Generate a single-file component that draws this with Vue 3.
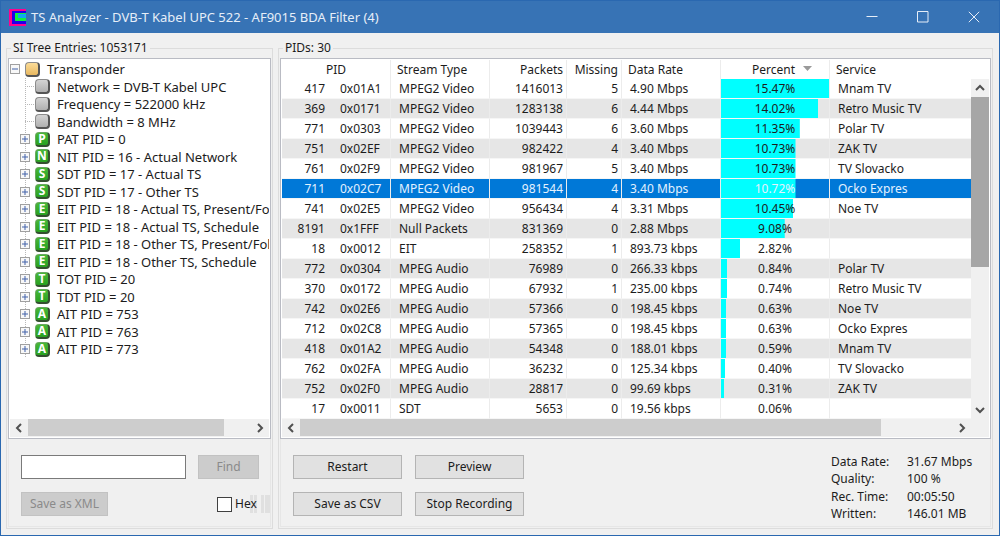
<script setup>
import { ref } from 'vue'

const search = ref('')
const hex = ref(false)
const selected = ref(711)

const tree = [
  { text: 'Network = DVB-T Kabel UPC' },
  { text: 'Frequency = 522000 kHz' },
  { text: 'Bandwidth = 8 MHz' },
  { letter: 'P', text: 'PAT PID = 0' },
  { letter: 'N', text: 'NIT PID = 16 - Actual Network' },
  { letter: 'S', text: 'SDT PID = 17 - Actual TS' },
  { letter: 'S', text: 'SDT PID = 17 - Other TS' },
  { letter: 'E', text: 'EIT PID = 18 - Actual TS, Present/Following' },
  { letter: 'E', text: 'EIT PID = 18 - Actual TS, Schedule' },
  { letter: 'E', text: 'EIT PID = 18 - Other TS, Present/Following' },
  { letter: 'E', text: 'EIT PID = 18 - Other TS, Schedule' },
  { letter: 'T', text: 'TOT PID = 20' },
  { letter: 'T', text: 'TDT PID = 20' },
  { letter: 'A', text: 'AIT PID = 753' },
  { letter: 'A', text: 'AIT PID = 763' },
  { letter: 'A', text: 'AIT PID = 773' },
]

const rows = [
  [417, '0x01A1', 'MPEG2 Video', 1416013, 5, '4.90 Mbps', '15.47', 'Mnam TV'],
  [369, '0x0171', 'MPEG2 Video', 1283138, 6, '4.44 Mbps', '14.02', 'Retro Music TV'],
  [771, '0x0303', 'MPEG2 Video', 1039443, 6, '3.60 Mbps', '11.35', 'Polar TV'],
  [751, '0x02EF', 'MPEG2 Video', 982422, 4, '3.40 Mbps', '10.73', 'ZAK TV'],
  [761, '0x02F9', 'MPEG2 Video', 981967, 5, '3.40 Mbps', '10.73', 'TV Slovacko'],
  [711, '0x02C7', 'MPEG2 Video', 981544, 4, '3.40 Mbps', '10.72', 'Ocko Expres'],
  [741, '0x02E5', 'MPEG2 Video', 956434, 4, '3.31 Mbps', '10.45', 'Noe TV'],
  [8191, '0x1FFF', 'Null Packets', 831369, 0, '2.88 Mbps', '9.08', ''],
  [18, '0x0012', 'EIT', 258352, 1, '893.73 kbps', '2.82', ''],
  [772, '0x0304', 'MPEG Audio', 76989, 0, '266.33 kbps', '0.84', 'Polar TV'],
  [370, '0x0172', 'MPEG Audio', 67932, 1, '235.00 kbps', '0.74', 'Retro Music TV'],
  [742, '0x02E6', 'MPEG Audio', 57366, 0, '198.45 kbps', '0.63', 'Noe TV'],
  [712, '0x02C8', 'MPEG Audio', 57365, 0, '198.45 kbps', '0.63', 'Ocko Expres'],
  [418, '0x01A2', 'MPEG Audio', 54348, 0, '188.01 kbps', '0.59', 'Mnam TV'],
  [762, '0x02FA', 'MPEG Audio', 36232, 0, '125.34 kbps', '0.40', 'TV Slovacko'],
  [752, '0x02F0', 'MPEG Audio', 28817, 0, '99.69 kbps', '0.31', 'ZAK TV'],
  [17, '0x0011', 'SDT', 5653, 0, '19.56 kbps', '0.06', ''],
]

const peak = 15.5
const barSize = (pct) => `${Math.round((pct / peak) * 100 + (pct > 0.2 && pct < 1 ? 1 : 0))}% 100%`
</script>

<template>
  <div class="window">
    <header class="titlebar">
      <svg class="logo" width="17" height="17" viewBox="0 0 17 17" aria-hidden="true">
        <rect width="17" height="17" fill="#ff0090" />
        <rect x="3" y="2" width="14" height="13" fill="#2000e8" />
        <rect x="6" y="4" width="11" height="8" fill="#10f040" />
        <rect x="9" y="5" width="8" height="4" fill="#10a8f0" />
      </svg>
      <h1>TS Analyzer - DVB-T Kabel UPC 522 - AF9015 BDA Filter (4)</h1>
      <button class="sys" type="button" aria-label="Minimize">
        <svg width="12" height="12" viewBox="0 0 12 12"><path d="M0.5 5.5h11" /></svg>
      </button>
      <button class="sys" type="button" aria-label="Maximize">
        <svg width="12" height="12" viewBox="0 0 12 12"><path d="M0.5 0.5h10.5v10.5h-10.5z" /></svg>
      </button>
      <button class="sys" type="button" aria-label="Close">
        <svg width="12" height="12" viewBox="0 0 12 12"><path d="M0.8 0.8l10.4 10.4M11.2 0.8L0.8 11.2" /></svg>
      </button>
    </header>

    <main>
      <fieldset class="group">
        <legend>SI Tree Entries: 1053171</legend>
        <div class="box tree-box">
          <div class="tree">
            <div class="node root">
              <button class="expander" type="button" aria-label="Collapse">
                <svg width="10" height="10" viewBox="0 0 10 10">
                  <rect x="0.5" y="0.5" width="9" height="9" fill="#f8f8f8" stroke="#a0a0a0" />
                  <path d="M2 5h6" stroke="#4060a8" />
                </svg>
              </button>
              <span class="tile amber"></span>
              <span>Transponder</span>
            </div>
            <ul>
              <li v-for="(n, i) in tree" :key="i" class="node">
                <button v-if="n.letter" class="expander" type="button" aria-label="Expand">
                  <svg width="10" height="10" viewBox="0 0 10 10">
                    <rect x="0.5" y="0.5" width="9" height="9" fill="#f8f8f8" stroke="#a0a0a0" />
                    <path d="M2 5h6M5 2v6" stroke="#4060a8" />
                  </svg>
                </button>
                <span v-else class="twig"></span>
                <span class="tile" :class="{ green: n.letter }">{{ n.letter }}</span>
                <span>{{ n.text }}</span>
              </li>
            </ul>
          </div>
          <div class="hbar">
            <button type="button" aria-label="Scroll left"><svg width="8" height="10" viewBox="0 0 8 10"><path d="M6 1L2 5l4 4" /></svg></button>
            <div class="track"><div class="thumb tree-thumb"></div></div>
            <button type="button" aria-label="Scroll right"><svg width="8" height="10" viewBox="0 0 8 10"><path d="M2 1l4 4-4 4" /></svg></button>
          </div>
        </div>
        <div class="panel find-panel">
          <input v-model="search" class="search" type="text" aria-label="Search text" />
          <button class="btn" type="button" disabled>Find</button>
          <button class="btn xml" type="button" disabled>Save as XML</button>
          <label class="hex"><input v-model="hex" type="checkbox" />Hex</label>
        </div>
      </fieldset>

      <fieldset class="group">
        <legend>PIDs: 30</legend>
        <div class="box">
          <div class="list">
            <table>
              <colgroup>
                <col class="c-pid" /><col class="c-type" /><col class="c-packets" /><col class="c-missing" />
                <col class="c-rate" /><col class="c-percent" /><col />
              </colgroup>
              <thead>
                <tr>
                  <th class="mid">PID</th>
                  <th>Stream Type</th>
                  <th class="num">Packets</th>
                  <th class="num">Missing</th>
                  <th>Data Rate</th>
                  <th class="mid">Percent<svg class="sort" width="9" height="5" viewBox="0 0 9 5"><path d="M0 0h9L4.5 5z" /></svg></th>
                  <th>Service</th>
                </tr>
              </thead>
              <tbody>
                <tr v-for="r in rows" :key="r[0]" :class="{ selected: r[0] === selected }" @click="selected = r[0]">
                  <td class="pid"><span class="dec">{{ r[0] }}</span><span>{{ r[1] }}</span></td>
                  <td>{{ r[2] }}</td>
                  <td class="num">{{ r[3] }}</td>
                  <td class="num">{{ r[4] }}</td>
                  <td>{{ r[5] }}</td>
                  <td class="pct" :style="{ backgroundSize: barSize(r[6]) }">{{ r[6] }}%</td>
                  <td>{{ r[7] }}</td>
                </tr>
              </tbody>
            </table>
            <div class="vbar">
              <button type="button" aria-label="Scroll up"><svg width="10" height="8" viewBox="0 0 10 8"><path d="M1 6l4-4 4 4" /></svg></button>
              <div class="track"><div class="thumb"></div></div>
              <button type="button" aria-label="Scroll down"><svg width="10" height="8" viewBox="0 0 10 8"><path d="M1 2l4 4 4-4" /></svg></button>
            </div>
          </div>
          <div class="hbar corner">
            <button type="button" aria-label="Scroll left"><svg width="8" height="10" viewBox="0 0 8 10"><path d="M6 1L2 5l4 4" /></svg></button>
            <div class="track"><div class="thumb list-thumb"></div></div>
            <button type="button" aria-label="Scroll right"><svg width="8" height="10" viewBox="0 0 8 10"><path d="M2 1l4 4-4 4" /></svg></button>
          </div>
        </div>
        <div class="panel run-panel">
          <div class="actions">
            <button class="btn" type="button">Restart</button>
            <button class="btn" type="button">Preview</button>
            <button class="btn" type="button">Save as CSV</button>
            <button class="btn" type="button">Stop Recording</button>
          </div>
          <dl>
            <dt>Data Rate:</dt><dd>31.67 Mbps</dd>
            <dt>Quality:</dt><dd>100 %</dd>
            <dt>Rec. Time:</dt><dd>00:05:50</dd>
            <dt>Written:</dt><dd>146.01 MB</dd>
          </dl>
        </div>
      </fieldset>
    </main>
  </div>
</template>

<style>
body { background: #f0f0f0; }
</style>

<style scoped>
* { box-sizing: border-box; }
.window {
  min-height: 100vh;
  display: flex;
  flex-direction: column;
  border: 1px solid #2a68b0;
  background: #f0f0f0;
  color: #1c1c1c;
  font: 12px/18px "Noto Sans", "Open Sans", sans-serif;
}
button, input { font: inherit; color: inherit; margin: 0; padding: 0; }
.titlebar {
  display: flex;
  align-items: center;
  height: 32px;
  padding-left: 8px;
  background: #3773b5;
  color: #e6eef8;
}
h1 { flex: 1; margin: 0 0 0 5px; font-size: 13px; font-weight: 400; white-space: nowrap; }
.sys { width: 51px; height: 32px; border: 0; background: none; display: grid; place-items: center; }
.sys svg { fill: none; stroke: #e6eef8; }
main {
  flex: 1;
  display: grid;
  grid-template-columns: 267px minmax(0, 1fr);
  gap: 5px;
  padding: 6px 6px 6px 5px;
}
.group {
  min-width: 0;
  margin: 0;
  padding: 1px 1px 1px;
  border: 1px solid #dcdcdc;
  display: flex;
  flex-direction: column;
}
legend { margin-left: 3px; padding: 0 2px; line-height: 18px; }
.box {
  flex: 1;
  min-width: 0;
  display: flex;
  flex-direction: column;
  background: #fff;
  border: 1px solid #b9bbc3;
  padding: 1px;
}
.tree { flex: 1; overflow: hidden; font-size: 13px; }
.node { display: flex; align-items: center; height: 17px; white-space: nowrap; }
.root { height: 18px; }
.node:nth-child(even) { height: 18px; }
ul {
  list-style: none;
  margin: 0 0 0 15px;
  padding: 0;
  background: repeating-linear-gradient(#b8b8b8 0 1px, #fff 1px 2px) 0 0 / 1px 280px no-repeat;
}
li.node { margin-left: -5px; }
.expander { flex: none; display: block; width: 10px; height: 10px; margin-right: 5px; border: 0; background: none; }
.expander svg { display: block; }
.twig { flex: none; width: 9px; margin: 0 1px 0 5px; border-top: 1px dotted #b8b8b8; }
.tile {
  flex: none;
  width: 15px;
  height: 15px;
  margin-right: 7px;
  border: 1px solid #8c8c8c;
  border-right: 2px solid #555;
  border-bottom: 2px solid #555;
  border-radius: 4px;
  background: linear-gradient(#d4d4d4, #b0b0b0);
  color: #fff;
  font: bold 12px/12px "Noto Sans", sans-serif;
  text-align: center;
}
.tile.amber { background: linear-gradient(#fbdc98, #e8b860); }
.tile.green { background: linear-gradient(#48b838, #28a020); border-color: #6aa860 #345030 #345030 #6aa860; }
.hbar { display: grid; grid-template-columns: 18px 1fr 18px; height: 18px; padding-bottom: 1px; background: #f0f0f0; }
.hbar.corner { grid-template-columns: 18px 1fr 18px 18px; }
.hbar button, .vbar button { border: 0; background: none; display: grid; place-items: center; }
.hbar svg, .vbar svg { fill: none; stroke: #505050; stroke-width: 2; }
.hbar .thumb { height: 100%; background: #cdcdcd; }
.tree-thumb { width: 88%; }
.list-thumb { width: 89%; }
.list { flex: 1; display: grid; grid-template-columns: minmax(0, 1fr) 18px; }
.vbar { display: grid; grid-template-rows: 18px 1fr 18px; margin-top: 19px; background: #f0f0f0; }
.vbar .thumb { height: 56%; background: #a6a6a6; }
table { width: 100%; table-layout: fixed; border-collapse: separate; border-spacing: 0; align-self: start; }
.c-pid { width: 109px; }
.c-type { width: 99px; }
.c-packets { width: 77px; }
.c-missing { width: 55px; }
.c-rate { width: 99px; }
.c-percent { width: 109px; }
th, td { padding: 0 3px 0 8px; text-align: left; white-space: nowrap; overflow: hidden; border-right: 1px solid #ececec; }
th { height: 19px; padding-left: 6px; font-weight: 400; line-height: 19px; }
td { height: 20px; line-height: 19px; border-bottom: 1px solid #f6f6f6; }
th:last-child, td:last-child { border-right: 0; }
.num { text-align: right; padding-left: 0; }
.mid { text-align: center; padding: 0; }
th.mid:nth-child(6) { padding-left: 14px; }
.sort { margin-left: 8px; vertical-align: 3px; fill: #9a9a9a; }
tbody tr:nth-child(even) { background: #e6e6e6; }
tbody tr.selected { background: #0078d7; color: #e4f2ff; }
.pid { padding-left: 0; }
.dec { display: inline-block; width: 43px; margin-right: 15px; text-align: right; }
.pct {
  padding: 0;
  text-align: center;
  background-image: linear-gradient(#0ff, #0ff);
  background-repeat: no-repeat;
  background-clip: padding-box;
}
.panel { height: 88px; border: 1px solid #e6e6e6; border-top: 0; }
.find-panel {
  display: grid;
  grid-template-columns: 165px 61px;
  grid-template-rows: 24px 24px;
  gap: 13px 12px;
  padding: 16px 0 0 12px;
}
.search { width: 100%; border: 1px solid #7a7a7a; background: #fff; padding: 0 4px; }
.btn { border: 1px solid #b4b4b4; background: #e1e1e1; height: 24px; line-height: 20px; }
.btn:disabled { background: #cccccc; border-color: #c2c2c2; color: #8a8a8a; }
.xml { width: 87px; }
.hex {
  display: flex;
  align-items: center;
  gap: 3px;
  margin-left: 19px;
  width: 54px;
  background:
    linear-gradient(#e0e0e0, #e0e0e0) 33px 50% / 3px 18px no-repeat,
    linear-gradient(#e0e0e0, #e0e0e0) 37px 50% / 3px 18px no-repeat,
    linear-gradient(90deg, #e0e0e0 0 3px, #f0f0f0 3px 4px, #e0e0e0 4px) 44px 50% / 9px 18px no-repeat;
}
.hex input {
  appearance: none;
  width: 15px;
  height: 15px;
  border: 1px solid #404040;
  background: #fff;
}
.hex input:checked { background: #0078d7; }
.run-panel { display: flex; justify-content: space-between; padding: 16px 16px 0 12px; }
.actions { display: grid; grid-template-columns: 109px 109px; grid-template-rows: 24px 24px; gap: 13px; }
dl { display: grid; grid-template-columns: 76px 67px; grid-template-rows: 17px 18px 17px 18px; margin: -2px 0 0; align-items: center; white-space: nowrap; align-content: start; }
dt, dd { margin: 0; }
</style>
